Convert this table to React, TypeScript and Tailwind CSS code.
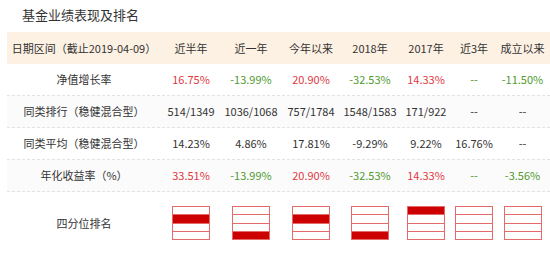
const cols = ["w-[154px]", "w-[60px]", "w-[60px]", "w-[60px]", "w-[58px]", "w-[54px]", "w-[42px]", "w-[55px]"];

const headers = ["日期区间（截止2019-04-09）", "近半年", "近一年", "今年以来", "2018年", "2017年", "近3年", "成立以来"];

type Cell = { v: string; c?: "red" | "green" };

const rows: { label: string; cells: Cell[]; shade?: boolean }[] = [
  {
    label: "净值增长率",
    cells: [
      { v: "16.75%", c: "red" },
      { v: "-13.99%", c: "green" },
      { v: "20.90%", c: "red" },
      { v: "-32.53%", c: "green" },
      { v: "14.33%", c: "red" },
      { v: "--", c: "green" },
      { v: "-11.50%", c: "green" },
    ],
  },
  {
    label: "同类排行（稳健混合型）",
    shade: true,
    cells: [
      { v: "514/1349" },
      { v: "1036/1068" },
      { v: "757/1784" },
      { v: "1548/1583" },
      { v: "171/922" },
      { v: "--" },
      { v: "--" },
    ],
  },
  {
    label: "同类平均（稳健混合型）",
    cells: [
      { v: "14.23%" },
      { v: "4.86%" },
      { v: "17.81%" },
      { v: "-9.29%" },
      { v: "9.22%" },
      { v: "16.76%" },
      { v: "--" },
    ],
  },
  {
    label: "年化收益率（%）",
    shade: true,
    cells: [
      { v: "33.51%", c: "red" },
      { v: "-13.99%", c: "green" },
      { v: "20.90%", c: "red" },
      { v: "-32.53%", c: "green" },
      { v: "14.33%", c: "red" },
      { v: "--", c: "green" },
      { v: "-3.56%", c: "green" },
    ],
  },
];

// which quarter is filled (0 = top), -1 = none
const quartiles = [1, 3, 1, 3, 0, -1, -1];

const Quartile = ({ filled }: { filled: number }) => (
  <div className="flex flex-col w-[38px] h-[34px] border border-[#e46a6a]">
    {[0, 1, 2, 3].map((i) => (
      <div
        key={i}
        className={
          "flex-1 " +
          (i < 3 ? "border-b border-[#e46a6a] " : "") +
          (i === filled ? "bg-[#cc0000]" : "bg-white")
        }
      />
    ))}
  </div>
);

export default function App() {
  return (
    <div
      className="w-[550px] h-[259px] bg-white text-[#333] text-[11px] overflow-hidden"
      style={{ fontFamily: '"Noto Sans CJK SC", "Liberation Sans", sans-serif' }}
    >
      <div className="h-[32px] pl-[22px] pt-[6px] text-[13px] leading-[18px] text-[#333]">基金业绩表现及排名</div>
      <div className="ml-[7px]">
        <div className="flex h-[32px] items-center bg-[#fdf1e3]">
          {headers.map((h, i) => (
            <div key={i} className={cols[i] + " text-center whitespace-nowrap"}>
              {h}
            </div>
          ))}
        </div>
        {rows.map((r, ri) => (
          <div
            key={ri}
            className={
              "flex h-[32px] items-center border-b border-dashed border-[#e2e2e2] " +
              (r.shade ? "bg-[#fbfbfb]" : "bg-white")
            }
          >
            <div className={cols[0] + " text-center whitespace-nowrap"}>{r.label}</div>
            {r.cells.map((c, ci) => (
              <div
                key={ci}
                className={
                  cols[ci + 1] +
                  " text-center whitespace-nowrap " +
                  (c.c === "red" ? "text-[#e0393e]" : c.c === "green" ? "text-[#4f9a2f]" : "")
                }
              >
                {c.v}
              </div>
            ))}
          </div>
        ))}
        <div className="flex h-[62px] items-center">
          <div className={cols[0] + " text-center"}>四分位排名</div>
          {quartiles.map((q, i) => (
            <div key={i} className={cols[i + 1] + " flex justify-center"}>
              <Quartile filled={q} />
            </div>
          ))}
        </div>
      </div>
    </div>
  );
}
